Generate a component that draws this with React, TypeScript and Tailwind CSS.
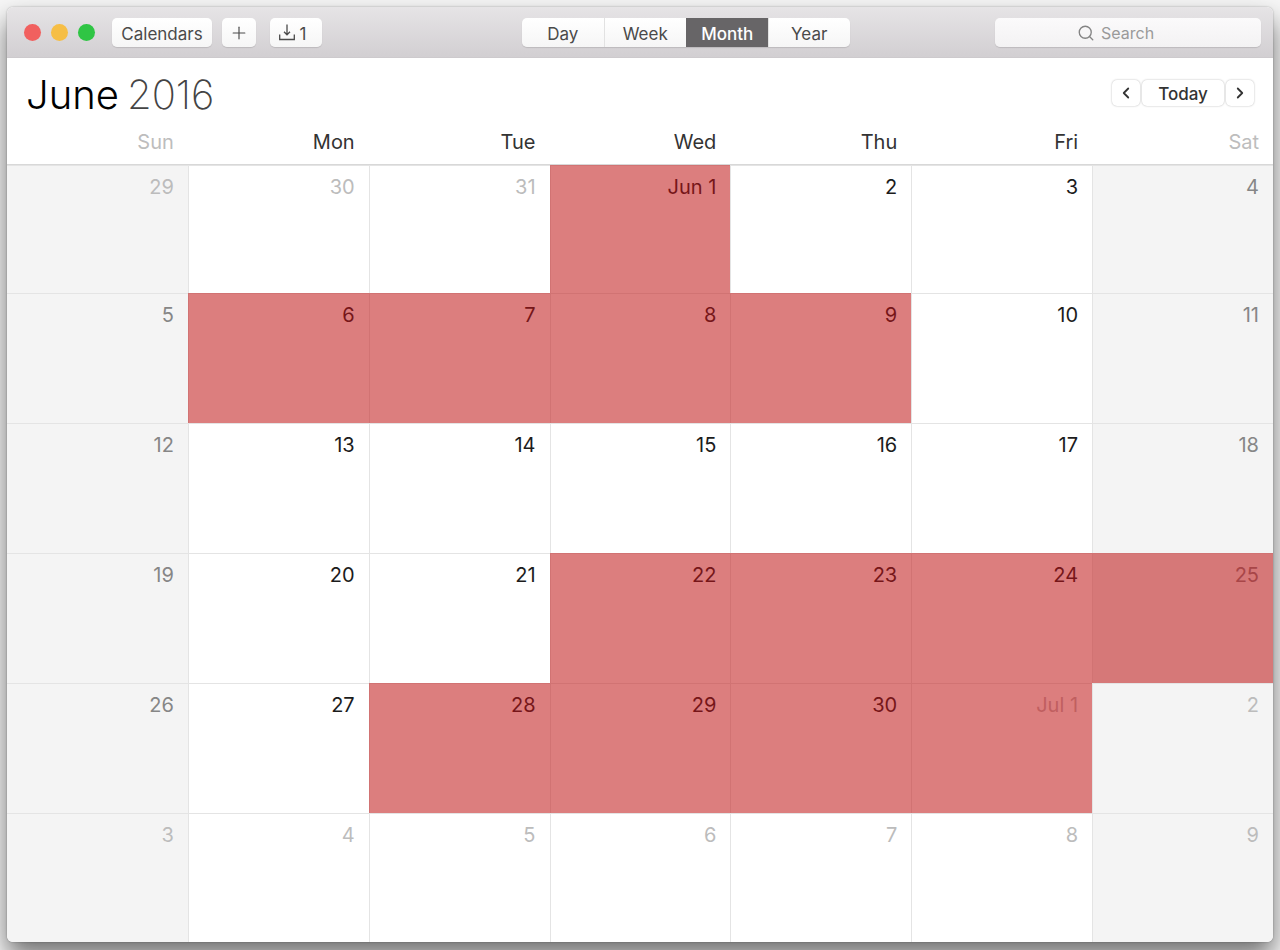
import React, { useState } from 'react';
import { ChevronLeft, ChevronRight, Plus, Search } from 'lucide-react';
import { clsx } from 'clsx';

type View = 'Day' | 'Week' | 'Month' | 'Year';

interface DayProps {
  label: string;
  weekend: boolean;
  outside: boolean;
  marked: boolean;
}

const views: View[] = ['Day', 'Week', 'Month', 'Year'];

const weekdays = ['Sun', 'Mon', 'Tue', 'Wed', 'Thu', 'Fri', 'Sat'];

const weeks = [
  ['29', '30', '31', 'Jun 1', '2', '3', '4'],
  ['5', '6', '7', '8', '9', '10', '11'],
  ['12', '13', '14', '15', '16', '17', '18'],
  ['19', '20', '21', '22', '23', '24', '25'],
  ['26', '27', '28', '29', '30', 'Jul 1', '2'],
  ['3', '4', '5', '6', '7', '8', '9'],
];

// day index counted from the first cell of the grid
const firstOfMonth = 3;
const lastOfMonth = 32;
const markedDays = [3, 8, 9, 10, 11, 24, 25, 26, 27, 30, 31, 32, 33];

const toolbarButton =
  'flex h-[29px] items-center justify-center rounded-[5px] bg-gradient-to-b from-white to-[#f6f6f6] text-[#4a4a4a] shadow-[0_1px_1px_rgba(0,0,0,0.12)]';

const navButton =
  'flex h-[26px] items-center justify-center rounded-[5px] bg-white text-[#333] shadow-[0_0_2px_rgba(0,0,0,0.3)]';

const DownloadIcon = () => (
  <svg width="18" height="18" viewBox="0 0 18 18" fill="none" stroke="currentColor" strokeWidth="1.3">
    <path d="M9 0.5V10.5M6 7.8L9 10.8L12 7.8" />
    <path d="M1.7 10.5V15.5H16.3V10.5" />
  </svg>
);

const Toolbar: React.FC = () => {
  const [view, setView] = useState<View>('Month');

  return (
    <header className="flex h-[51px] items-center rounded-t-md border-b border-[#cdcacd] bg-gradient-to-b from-[#e6e4e6] to-[#d2cfd2] pt-px pr-3 pl-[17px] text-[17px] leading-6">
      <div className="flex gap-[10px]">
        <button aria-label="Close" className="size-[17px] rounded-full bg-[#f1605f]" />
        <button aria-label="Minimize" className="size-[17px] rounded-full bg-[#f6be45]" />
        <button aria-label="Zoom" className="size-[17px] rounded-full bg-[#2fc544]" />
      </div>

      <button className={clsx(toolbarButton, 'ml-[17px] w-[100px] pt-0.5')}>Calendars</button>
      <button aria-label="Add event" className={clsx(toolbarButton, 'ml-[10px] w-[34px]')}>
        <Plus size={20} strokeWidth={1.4} />
      </button>
      <button aria-label="Invitations" className={clsx(toolbarButton, 'ml-[14px] w-[52px] gap-1 pr-2')}>
        <DownloadIcon />
        <span className="pt-0.5">1</span>
      </button>

      <div className="flex-[11]" />

      <div className="flex h-[29px] overflow-hidden rounded-[5px] bg-gradient-to-b from-white to-[#f6f6f6] shadow-[0_1px_1px_rgba(0,0,0,0.12)]">
        {views.map((name) => (
          <button
            key={name}
            onClick={() => setView(name)}
            className={clsx(
              'w-[82px] border-l pt-0.5 first:border-l-0',
              name === view ? 'border-[#676567] bg-[#676567] font-medium text-white' : 'border-[#e2e2e2] text-[#4a4a4a]'
            )}
          >
            {name}
          </button>
        ))}
      </div>

      <div className="flex-[8]" />

      <label className="flex h-[29px] w-[266px] items-center gap-1.5 rounded-[5px] bg-gradient-to-b from-[#fbfafb] to-[#f3f2f3] pl-[82px] text-[#848484] shadow-[0_1px_1px_rgba(0,0,0,0.12)]">
        <Search size={18} strokeWidth={1.8} className="shrink-0" />
        <input
          type="text"
          aria-label="Search"
          placeholder="Search"
          className="min-w-0 flex-1 bg-transparent text-base outline-none placeholder:text-[#9a9a9a]"
        />
      </label>
    </header>
  );
};

const Day: React.FC<DayProps> = ({ label, weekend, outside, marked }) => (
  <td
    className={clsx(
      'border-t border-l p-0 pt-[7px] pr-[14px] text-right align-top leading-7 first:border-l-0',
      marked ? 'border-[#d17373]' : 'border-[#e4e4e4]',
      marked && (weekend ? 'bg-[#d67878]' : 'bg-[#dc7e7e]'),
      !marked && weekend && 'bg-[#f4f4f4]',
      marked && (outside ? 'text-[#c05f60]' : weekend ? 'text-[#a84648]' : 'text-[#761619]'),
      !marked && (outside ? 'text-[#bcbcbc]' : weekend ? 'text-[#868686]' : 'text-[#1c1c1c]')
    )}
  >
    {label}
  </td>
);

const MonthGrid: React.FC = () => (
  <table className="w-full table-fixed border-separate border-spacing-0 text-xl">
    <thead>
      <tr>
        {weekdays.map((name, i) => (
          <th
            key={name}
            scope="col"
            className={clsx(
              'h-[37px] border-b border-[#d8d8d8] p-0 pr-[14px] pb-2 text-right leading-7 font-normal',
              i === 0 || i === 6 ? 'text-[#bdbdbd]' : 'text-[#333]'
            )}
          >
            {name}
          </th>
        ))}
      </tr>
    </thead>
    <tbody>
      {weeks.map((week, row) => (
        <tr key={row} className="h-[130px] first:h-32 last:h-[129px]">
          {week.map((label, col) => {
            const index = row * 7 + col;
            return (
              <Day
                key={index}
                label={label}
                weekend={col === 0 || col === 6}
                outside={index < firstOfMonth || index > lastOfMonth}
                marked={markedDays.includes(index)}
              />
            );
          })}
        </tr>
      ))}
    </tbody>
  </table>
);

export default function App() {
  return (
    <div className="min-h-screen overflow-hidden bg-[#f6f6f6] p-[7px] font-['Inter','Liberation_Sans',sans-serif]">
      <main className="overflow-hidden rounded-md bg-white shadow-[0_14px_26px_rgba(0,0,0,0.55),0_0_2px_rgba(0,0,0,0.3)]">
        <Toolbar />
        <div className="flex h-[70px] items-center justify-between pr-[19px] pl-[19px]">
          <h1 className="flex gap-2 pt-1 text-[40px] leading-none font-light text-black">
            <span>June</span>
            <span className="font-extralight text-[#444]">2016</span>
          </h1>
          <div className="flex gap-0.5 text-[17px] leading-6">
            <button aria-label="Previous month" className={clsx(navButton, 'w-7')}>
              <ChevronLeft size={18} strokeWidth={2.4} />
            </button>
            <button className={clsx(navButton, 'w-[82px] pt-0.5 font-medium')}>Today</button>
            <button aria-label="Next month" className={clsx(navButton, 'w-7')}>
              <ChevronRight size={18} strokeWidth={2.4} />
            </button>
          </div>
        </div>
        <MonthGrid />
      </main>
    </div>
  );
}
